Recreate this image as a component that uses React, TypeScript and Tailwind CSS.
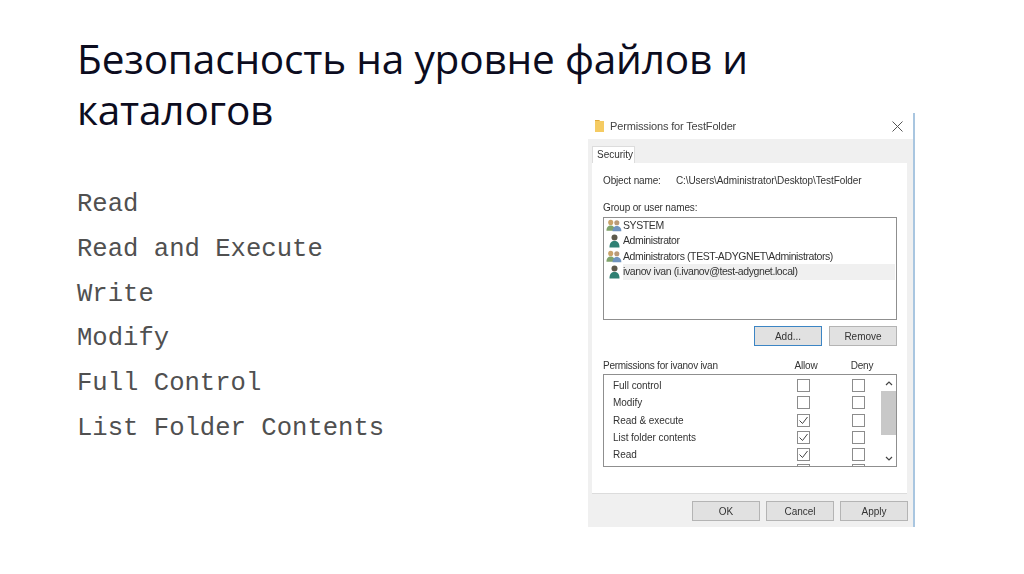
import React from 'react';

const users = [
  { name: 'SYSTEM', group: true },
  { name: 'Administrator', group: false },
  { name: 'Administrators (TEST-ADYGNET\\Administrators)', group: true },
  { name: 'ivanov ivan (i.ivanov@test-adygnet.local)', group: false, selected: true },
];

const perms = [
  { name: 'Full control', allow: false },
  { name: 'Modify', allow: false },
  { name: 'Read & execute', allow: true },
  { name: 'List folder contents', allow: true },
  { name: 'Read', allow: true },
];

const rights = ['Read', 'Read and Execute', 'Write', 'Modify', 'Full Control', 'List Folder Contents'];

const UserIcon: React.FC<{ group: boolean }> = ({ group }) =>
  group ? (
    <svg width="16" height="13" viewBox="0 0 17 13" className="shrink-0">
      <circle cx="5" cy="3.2" r="2.7" fill="#c9a36a" />
      <path d="M0.5 12c0-4 2-5.5 4.5-5.5S9.5 8 9.5 12z" fill="#7fa36b" />
      <circle cx="11.5" cy="3.6" r="2.7" fill="#b99a78" />
      <path d="M7 12.5c0-4 2-5.5 4.5-5.5s4.8 1.5 4.8 5.5z" fill="#6f94bf" />
    </svg>
  ) : (
    <svg width="13" height="14" viewBox="0 0 13 14" className="shrink-0">
      <circle cx="6.5" cy="3.5" r="3" fill="#5d5a4c" />
      <path d="M1.5 13.5c0-5 2-6.500 5-6.500s5 1.500 5 6.500z" fill="#2f8073" />
    </svg>
  );

const Check: React.FC<{ checked?: boolean }> = ({ checked }) => (
  <div className="w-[13px] h-[13px] border border-[#8c8c8c] bg-white flex items-center justify-center">
    {checked && (
      <svg width="11" height="11" viewBox="0 0 11 11">
        <path d="M1.5 5.5 4.5 8.5 9.5 2" fill="none" stroke="#444" strokeWidth="1" />
      </svg>
    )}
  </div>
);

const DlgButton: React.FC<{ label: string; focused?: boolean }> = ({ label, focused }) => (
  <button className={`w-[68px] h-[20px] bg-[#e1e1e1] text-[10px] text-[#333] border ${focused ? 'border-[#3c85c4]' : 'border-[#b4b4b4]'}`}>
    {label}
  </button>
);

export default function App() {
  return (
    <div className="w-[1024px] h-[574px] bg-white overflow-hidden flex font-['Liberation_Sans',sans-serif]">
      <div className="w-[511px] ml-[77px] shrink-0">
        <h1 className="w-[720px] mt-[33px] text-[40.6px] leading-[51px] tracking-[-0.2px] text-[#0c0c1e] font-['Open_Sans',sans-serif]">
          Безопасность на уровне файлов и<br />каталогов
        </h1>
        <ul className="mt-[48px] font-['Liberation_Mono',monospace] text-[25.6px] leading-[44.8px] text-[#505050]">
          {rights.map(r => <li key={r}>{r}</li>)}
        </ul>
      </div>

      <div className="w-[327px] h-[414px] mt-[113px] flex flex-col bg-[#f0f0f0] border-r-2 border-[#a9c6e0] shrink-0 blur-[0.3px]">
        <div className="h-[26px] bg-white flex items-center pl-[7px] pr-[10px] gap-[6px] text-[11px] tracking-[-0.15px] text-[#444]">
          <svg width="9" height="12" viewBox="0 0 9 12">
            <path d="M0 0h4l1 1h4v11H0z" fill="#f5cb62" />
            <path d="M0 0h4l1 1H0z" fill="#e0a93a" />
          </svg>
          <span>Permissions for TestFolder</span>
          <svg width="11" height="11" viewBox="0 0 11 11" className="ml-auto">
            <path d="M0.5 0.5 10.5 10.5M10.5 0.5 0.5 10.5" stroke="#555" strokeWidth="1" />
          </svg>
        </div>
        <div className="flex-1 flex flex-col pt-[7px] pl-[4px] pr-[6px]">
          <div className="w-[43px] h-[17px] bg-white border border-b-0 border-[#dcdcdc] text-[10px] text-[#333] pl-[4px] leading-[15px]">Security</div>
          <div className="h-[331px] bg-white border-b border-[#dcdcdc] pl-[11px] pr-[10px] pt-[10px] text-[10px] tracking-[-0.15px] text-[#333]">
            <div className="flex h-[14px] items-center">
              <span className="w-[73px]">Object name:</span>
              <span className="tracking-[-0.1px]">C:\Users\Administrator\Desktop\TestFolder</span>
            </div>
            <div className="mt-[13px] h-[14px] flex items-center">Group or user names:</div>
            <div className="mt-[3px] h-[103px] border border-[#8f8f8f] pl-[2px] pr-[1px] text-[10.5px] tracking-[-0.4px]">
              {users.map(u => (
                <div key={u.name} className="h-[15.4px] flex items-center gap-[1px]">
                  <div className="w-[16px] flex justify-center"><UserIcon group={u.group} /></div>
                  <span className={`flex-1 h-full flex items-center ${u.selected ? 'bg-[#f0f0f0]' : ''}`}>{u.name}</span>
                </div>
              ))}
            </div>
            <div className="mt-[6px] flex justify-end gap-[7px] tracking-normal">
              <DlgButton label="Add..." focused />
              <DlgButton label="Remove" />
            </div>
            <div className="mt-[12px] h-[14px] flex items-center">
              <span className="w-[177px] tracking-[-0.26px]">Permissions for ivanov ivan</span>
              <span className="w-[52px] text-center">Allow</span>
              <span className="w-[60px] text-center">Deny</span>
            </div>
            <div className="mt-[2px] h-[93px] border border-[#8f8f8f] flex overflow-hidden">
              <div className="flex-1 pl-[9px] overflow-hidden tracking-[-0.05px]">
                {perms.map(p => (
                  <div key={p.name} className="h-[17.25px] flex items-center first:mt-[2px]">
                    <span className="w-[184px]">{p.name}</span>
                    <div className="w-[55px]"><Check checked={p.allow} /></div>
                    <Check />
                  </div>
                ))}
                <div className="flex mt-[1px] ml-[184px]">
                  <div className="w-[55px]"><Check /></div>
                  <Check />
                </div>
              </div>
              <div className="w-[15px] flex flex-col items-center">
                <div className="h-[16px] flex items-center">
                  <svg width="8" height="5" viewBox="0 0 8 5"><path d="M1 4 4 1 7 4" fill="none" stroke="#444" strokeWidth="1.2" /></svg>
                </div>
                <div className="w-full h-[44px] bg-[#c8c8c8]"></div>
                <div className="mt-auto h-[16px] flex items-center">
                  <svg width="8" height="5" viewBox="0 0 8 5"><path d="M1 1 4 4 7 1" fill="none" stroke="#444" strokeWidth="1.2" /></svg>
                </div>
              </div>
            </div>
          </div>
          <div className="flex justify-end gap-[6px] pt-[7px] -mr-[1px]">
            <DlgButton label="OK" />
            <DlgButton label="Cancel" />
            <DlgButton label="Apply" />
          </div>
        </div>
      </div>
    </div>
  );
}
